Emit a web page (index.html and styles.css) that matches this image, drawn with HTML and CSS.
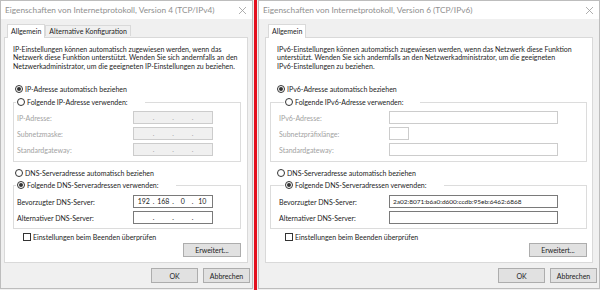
FILE: index.html
```html
<!DOCTYPE html>
<html lang="de">
<head>
    <meta charset="UTF-8">
    <title>Eigenschaften von Internetprotokoll</title>
    <link rel="stylesheet" href="styles.css">
</head>
<body>
<div class="screen">
    <!-- IPv4 dialog -->
    <div class="dialog dialog-v4">
        <div class="titlebar">
            <span>Eigenschaften von Internetprotokoll, Version 4 (TCP/IPv4)</span>
            <svg class="close" width="7" height="7" viewBox="0 0 7 7"><path d="M0 0L7 7M7 0L0 7" stroke="#9a9a9a" stroke-width="0.8"/></svg>
        </div>
        <div class="tabs">
            <div class="tab active">Allgemein</div>
            <div class="tab">Alternative Konfiguration</div>
        </div>
        <div class="panel">
            <p class="intro">IP-Einstellungen können automatisch zugewiesen werden, wenn das<br>Netzwerk diese Funktion unterstützt. Wenden Sie sich andernfalls an den<br>Netzwerkadministrator, um die geeigneten IP-Einstellungen zu beziehen.</p>
            <div class="radio first"><span class="dot checked"></span>IP-Adresse automatisch beziehen</div>
            <fieldset class="group">
                <legend class="radio"><span class="dot"></span>Folgende IP-Adresse verwenden:</legend>
                <div class="row"><span class="lbl off">IP-Adresse:</span><span class="ip off"><span class="oct"></span><span class="sep">.</span><span class="oct"></span><span class="sep">.</span><span class="oct"></span><span class="sep">.</span><span class="oct"></span></span></div>
                <div class="row"><span class="lbl off">Subnetzmaske:</span><span class="ip off"><span class="oct"></span><span class="sep">.</span><span class="oct"></span><span class="sep">.</span><span class="oct"></span><span class="sep">.</span><span class="oct"></span></span></div>
                <div class="row"><span class="lbl off">Standardgateway:</span><span class="ip off"><span class="oct"></span><span class="sep">.</span><span class="oct"></span><span class="sep">.</span><span class="oct"></span><span class="sep">.</span><span class="oct"></span></span></div>
            </fieldset>
            <div class="radio dns-auto"><span class="dot"></span>DNS-Serveradresse automatisch beziehen</div>
            <fieldset class="group dns">
                <legend class="radio"><span class="dot checked"></span>Folgende DNS-Serveradressen verwenden:</legend>
                <div class="row"><span class="lbl">Bevorzugter DNS-Server:</span><span class="ip"><span class="oct">192</span><span class="sep">.</span><span class="oct">168</span><span class="sep">.</span><span class="oct">0</span><span class="sep">.</span><span class="oct">10</span></span></div>
                <div class="row"><span class="lbl">Alternativer DNS-Server:</span><span class="ip"><span class="oct"></span><span class="sep">.</span><span class="oct"></span><span class="sep">.</span><span class="oct"></span><span class="sep">.</span><span class="oct"></span></span></div>
            </fieldset>
            <div class="check"><span class="box"></span>Einstellungen beim Beenden überprüfen</div>
            <div class="advanced"><button class="btn wide">Erweitert...</button></div>
        </div>
        <div class="footer">
            <button class="btn">OK</button>
            <button class="btn">Abbrechen</button>
        </div>
    </div>

    <div class="divider"></div>

    <!-- IPv6 dialog -->
    <div class="dialog dialog-v6">
        <div class="titlebar">
            <span>Eigenschaften von Internetprotokoll, Version 6 (TCP/IPv6)</span>
            <svg class="close" width="7" height="7" viewBox="0 0 7 7"><path d="M0 0L7 7M7 0L0 7" stroke="#9a9a9a" stroke-width="0.8"/></svg>
        </div>
        <div class="tabs">
            <div class="tab active">Allgemein</div>
        </div>
        <div class="panel">
            <p class="intro">IPv6-Einstellungen können automatisch zugewiesen werden, wenn das Netzwerk diese Funktion<br>unterstützt. Wenden Sie sich andernfalls an den Netzwerkadministrator, um die geeigneten<br>IPv6-Einstellungen zu beziehen.</p>
            <div class="radio first"><span class="dot checked"></span>IPv6-Adresse automatisch beziehen</div>
            <fieldset class="group">
                <legend class="radio"><span class="dot"></span>Folgende IPv6-Adresse verwenden:</legend>
                <div class="row"><span class="lbl off">IPv6-Adresse:</span><span class="field off"></span></div>
                <div class="row"><span class="lbl off">Subnetzpräfixlänge:</span><span class="field off short"></span></div>
                <div class="row"><span class="lbl off">Standardgateway:</span><span class="field off"></span></div>
            </fieldset>
            <div class="radio dns-auto"><span class="dot"></span>DNS-Serveradresse automatisch beziehen</div>
            <fieldset class="group dns">
                <legend class="radio"><span class="dot checked"></span>Folgende DNS-Serveradressen verwenden:</legend>
                <div class="row"><span class="lbl">Bevorzugter DNS-Server:</span><span class="field">2a02:8071:b6a0:d600:ccdb:95eb:6462:6868</span></div>
                <div class="row"><span class="lbl">Alternativer DNS-Server:</span><span class="field"></span></div>
            </fieldset>
            <div class="check"><span class="box"></span>Einstellungen beim Beenden überprüfen</div>
            <div class="advanced"><button class="btn wide">Erweitert...</button></div>
        </div>
        <div class="footer">
            <button class="btn">OK</button>
            <button class="btn">Abbrechen</button>
        </div>
    </div>
</div>
</body>
</html>
```

FILE: styles.css
```css
/* Reset default styles */
* {
    margin: 0;
    padding: 0;
    box-sizing: border-box;
}
body {
    font-family: 'Lato', 'Noto Sans', sans-serif;
    font-size: 7px;
    color: #1c1c1c;
    background-color: #f0f0f0;
    white-space: nowrap;
}
.screen {
    display: flex;
    width: 600px;
    height: 290px;
}
.divider {
    width: 3px;
    background-color: #e3101e; /* red separator between the two shots */
    margin: 0 1px;
}
.dialog {
    display: flex;
    flex-direction: column;
    height: 289px;
    background-color: #f0f0f0;
    border: 1px solid #bdbdbd;
}
.dialog-v4 {
    width: 253px;
}
.dialog-v6 {
    flex: 1;
}
.titlebar {
    height: 18px;
    background-color: #fff;
    color: #8f8f8f;
    display: flex;
    align-items: center;
    justify-content: space-between;
    padding: 0 6px 0 4px;
    font-size: 8.3px;
}
.tabs {
    display: flex;
    align-items: flex-end;
    height: 18px;
    position: relative;
    z-index: 1;
}
.dialog-v4 .tabs {
    padding-left: 6px;
}
.dialog-v6 .tabs {
    padding-left: 9px;
}
.tab {
    height: 11px;
    line-height: 10px;
    padding: 0 3px;
    border: 1px solid #d9d9d9;
    border-bottom: none;
    background-color: #f0f0f0;
    margin-bottom: 1px;
}
.tab.active {
    height: 14px;
    line-height: 12px;
    background-color: #fff;
    margin-bottom: -1px;
}
.panel {
    height: 226px;
    background-color: #fff;
    border: 1px solid #d9d9d9;
    display: flex;
    flex-direction: column;
}
.dialog-v4 .panel {
    margin: 0 4px 0 3px;
    padding: 0 6px 0 8px;
}
.dialog-v6 .panel {
    margin: 0 6px 0 6px;
    padding: 0 5px 0 4px;
}
.intro {
    margin-top: 7px;
    line-height: 8.4px;
}
.dialog-v6 .intro {
    padding-left: 7px;
}
.radio {
    display: flex;
    align-items: center;
    height: 10px;
    line-height: 10px;
}
.dialog-v4 .radio.first,
.dialog-v4 .radio.dns-auto {
    padding-left: 2px;
}
.dialog-v6 .radio.first,
.dialog-v6 .radio.dns-auto {
    padding-left: 7px;
}
.radio.first {
    margin-top: 14px;
}
.radio.dns-auto {
    margin-top: 6px;
}
.dot {
    width: 8px;
    height: 8px;
    border: 1px solid #333;
    border-radius: 50%;
    margin-right: 2px;
    display: flex;
    align-items: center;
    justify-content: center;
}
.dot.checked::after {
    content: '';
    width: 4px;
    height: 4px;
    border-radius: 50%;
    background-color: #333;
}
.group {
    border: 1px solid #dcdcdc;
    margin-top: 3px;
    padding: 4px 0 5px 3px;
    min-width: 0;
}
.group.dns {
    margin-top: 2px;
    padding: 5px 0 4px 3px;
}
.group legend {
    padding: 0 17px 0 1px;
    margin-left: -1px;
}
.dialog-v6 .group legend {
    margin-left: 5px;
}
.dialog-v6 .group {
    padding-left: 8px;
}
.row {
    display: flex;
    align-items: center;
    height: 13px;
}
.row + .row {
    margin-top: 3px;
}
.lbl {
    width: 116px;
}
.dialog-v6 .lbl {
    width: 110px;
}
.off {
    color: #a2a2a2;
}
.ip {
    display: flex;
    width: 80px;
    height: 13px;
    border: 1px solid #7a7a7a;
    background-color: #fff;
    line-height: 11px;
    color: #1c1c1c;
}
.ip.off {
    border-color: #cccccc;
    background-color: #f0f0f0;
    color: #a2a2a2;
}
.oct {
    flex: 1;
    text-align: center;
}
.sep {
    width: 0;
    display: flex;
    justify-content: center;
}
.field {
    width: 169px;
    height: 13px;
    border: 1px solid #7a7a7a;
    line-height: 11px;
    padding-left: 3px;
    font-size: 6.5px;
}
.field.off {
    border-color: #cccccc;
}
.field.short {
    width: 20px;
}
.check {
    display: flex;
    align-items: center;
    height: 10px;
    margin-top: 3px;
}
.dialog-v4 .check {
    padding-left: 10px;
}
.dialog-v6 .check {
    padding-left: 15px;
}
.box {
    width: 8px;
    height: 8px;
    border: 1px solid #333;
    margin-right: 2px;
}
.advanced {
    display: flex;
    justify-content: flex-end;
    margin-top: 1px;
}
.btn {
    font-family: inherit;
    font-size: 7px;
    color: #1c1c1c;
    width: 47px;
    height: 15px;
    background-color: #e1e1e1;
    border: 1px solid #adadad;
}
.btn.wide {
    width: 58px;
    height: 14px;
}
.footer {
    display: flex;
    justify-content: flex-end;
    gap: 5px;
    padding: 5px 2px 0 0;
}
```
